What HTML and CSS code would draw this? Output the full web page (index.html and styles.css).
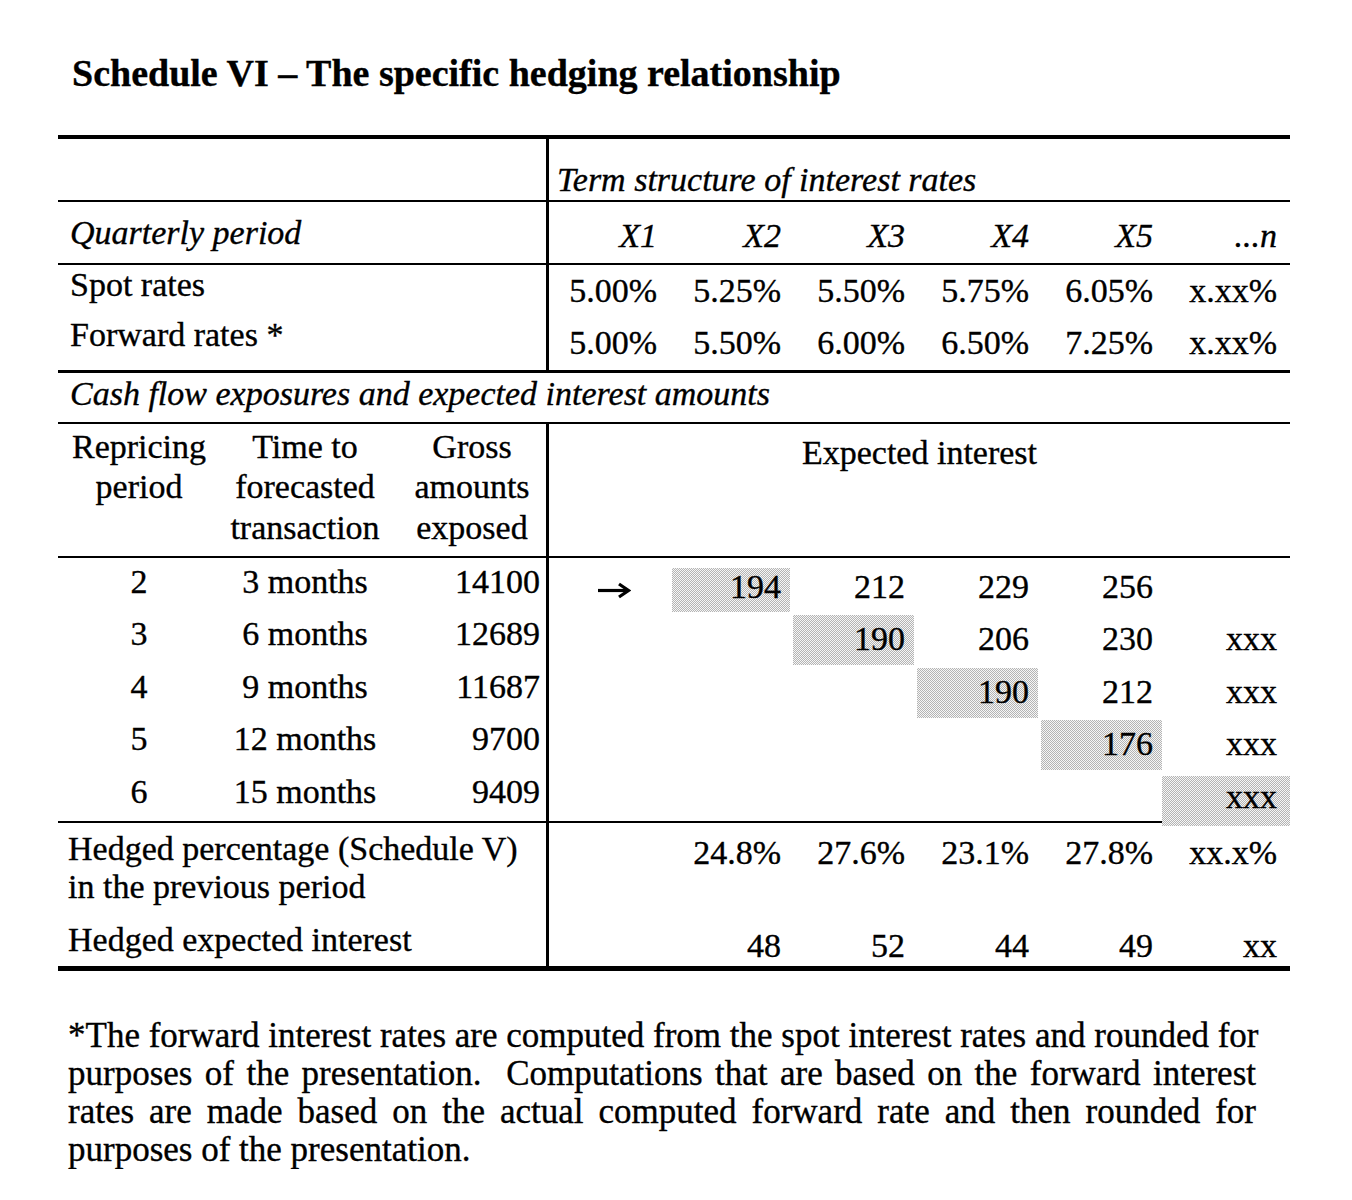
FILE: index.html
```html
<!DOCTYPE html>
<html lang="en">
<head>
<meta charset="utf-8">
<title>Schedule VI</title>
<link rel="stylesheet" href="styles.css">
</head>
<body>
<h1 class="title">Schedule VI – The specific hedging relationship</h1>
<div class="table">
  <div class="row r-term">
    <div class="lab"></div>
    <div class="span-right it">Term structure of interest rates</div>
  </div>
  <div class="row r-period">
    <div class="lab it">Quarterly period</div>
    <div class="num it">X1</div>
    <div class="num it">X2</div>
    <div class="num it">X3</div>
    <div class="num it">X4</div>
    <div class="num it">X5</div>
    <div class="num it">...n</div>
    <div></div>
  </div>
  <div class="row r-spot">
    <div class="lab">Spot rates</div>
    <div class="num">5.00%</div>
    <div class="num">5.25%</div>
    <div class="num">5.50%</div>
    <div class="num">5.75%</div>
    <div class="num">6.05%</div>
    <div class="num">x.xx%</div>
    <div></div>
  </div>
  <div class="row r-fwd">
    <div class="lab">Forward rates *</div>
    <div class="num">5.00%</div>
    <div class="num">5.50%</div>
    <div class="num">6.00%</div>
    <div class="num">6.50%</div>
    <div class="num">7.25%</div>
    <div class="num">x.xx%</div>
    <div></div>
  </div>
  <div class="row r-cash">
    <div class="full it">Cash flow exposures and expected interest amounts</div>
  </div>
  <div class="row r-head">
    <div class="lab sub3">
      <div class="ca">Repricing<br>period</div>
      <div class="cb">Time to<br>forecasted<br>transaction</div>
      <div class="cc hc">Gross<br>amounts<br>exposed</div>
    </div>
    <div class="exp">Expected interest</div>
  </div>
  <div class="row r-data">
    <div class="lab sub3">
      <div class="ca">2</div><div class="cb">3 months</div><div class="cc">14100</div>
    </div>
    <div class="arrow"><svg class="arrow-icon" width="34" height="18" viewBox="0 0 34 18" aria-label="arrow"><path d="M1 9.5 H30" stroke="#000" stroke-width="3.2" fill="none"/><path d="M22 3 L31.5 9.5 L22 16" stroke="#000" stroke-width="3.2" fill="none" stroke-linejoin="miter"/></svg></div>
    <div class="num"><span class="shade first">194</span></div>
    <div class="num">212</div>
    <div class="num">229</div>
    <div class="num">256</div>
    <div class="num"></div>
    <div></div>
  </div>
  <div class="row r-data">
    <div class="lab sub3">
      <div class="ca">3</div><div class="cb">6 months</div><div class="cc">12689</div>
    </div>
    <div></div>
    <div class="num"></div>
    <div class="num"><span class="shade">190</span></div>
    <div class="num">206</div>
    <div class="num">230</div>
    <div class="num">xxx</div>
    <div></div>
  </div>
  <div class="row r-data">
    <div class="lab sub3">
      <div class="ca">4</div><div class="cb">9 months</div><div class="cc">11687</div>
    </div>
    <div></div>
    <div class="num"></div>
    <div class="num"></div>
    <div class="num"><span class="shade">190</span></div>
    <div class="num">212</div>
    <div class="num">xxx</div>
    <div></div>
  </div>
  <div class="row r-data">
    <div class="lab sub3">
      <div class="ca">5</div><div class="cb">12 months</div><div class="cc">9700</div>
    </div>
    <div></div>
    <div class="num"></div>
    <div class="num"></div>
    <div class="num"></div>
    <div class="num"><span class="shade">176</span></div>
    <div class="num">xxx</div>
    <div></div>
  </div>
  <div class="row r-data last">
    <div class="lab sub3">
      <div class="ca">6</div><div class="cb">15 months</div><div class="cc">9409</div>
    </div>
    <div></div>
    <div class="num"></div>
    <div class="num"></div>
    <div class="num"></div>
    <div class="num"></div>
    <div class="num"><span class="shade end">xxx</span></div>
    <div></div>
  </div>
  <div class="row r-hp">
    <div class="lab">Hedged percentage (Schedule V)<br>in the previous period</div>
    <div></div>
    <div class="num">24.8%</div>
    <div class="num">27.6%</div>
    <div class="num">23.1%</div>
    <div class="num">27.8%</div>
    <div class="num">xx.x%</div>
    <div></div>
  </div>
  <div class="row r-he">
    <div class="lab">Hedged expected interest</div>
    <div></div>
    <div class="num">48</div>
    <div class="num">52</div>
    <div class="num">44</div>
    <div class="num">49</div>
    <div class="num">xx</div>
    <div></div>
  </div>
</div>
<p class="note">
  <span class="ln">*The forward interest rates are computed from the spot interest rates and rounded for</span>
  <span class="ln">purposes of the presentation.&nbsp; Computations that are based on the forward interest</span>
  <span class="ln">rates are made based on the actual computed forward rate and then rounded for</span>
  <span class="ln lastln">purposes of the presentation.</span>
</p>
</body>
</html>
```

FILE: styles.css
```css
* {
  box-sizing: border-box;
}

body {
  margin: 0;
  background: #fff;
  color: #000;
  font-family: "Liberation Serif", "Times New Roman", serif;
  font-size: 34px;
  -webkit-text-stroke: 0.35px #000;
}

.title {
  margin: 51px 0 0 72px;
  height: 44px;
  font-size: 38px;
  line-height: 44px;
  font-weight: bold;
}

.table {
  margin: 40px 0 0 58px;
  width: 1232px;
  border-top: 4px solid #000;
}

.row {
  display: grid;
  grid-template-columns: 491px 108px repeat(5, 124px) 13px;
  line-height: 38px;
  white-space: nowrap;
}

.it {
  font-style: italic;
}

.lab {
  border-right: 3px solid #000;
  padding-left: 12px;
}

.num {
  text-align: right;
}

.span-right {
  grid-column: 2 / -1;
  padding-left: 8px;
}

.full {
  grid-column: 1 / -1;
  padding-left: 12px;
}

/* upper section */
.r-term {
  height: 63px;
  border-bottom: 2px solid #000;
}
.r-term > * {
  padding-top: 21.5px;
}

.r-period {
  height: 63px;
  border-bottom: 2px solid #000;
}
.r-period > * {
  padding-top: 14.5px;
}
.r-period > .lab {
  padding-top: 12px;
}

.r-spot {
  height: 50px;
}
.r-spot > * {
  padding-top: 6.5px;
}
.r-spot > .lab {
  padding-top: 0.5px;
}

.r-fwd {
  height: 58px;
  border-bottom: 3px solid #000;
}
.r-fwd > * {
  padding-top: 8.5px;
}
.r-fwd > .lab {
  padding-top: 1px;
}

.r-cash {
  height: 51px;
  border-bottom: 2px solid #000;
}
.r-cash > * {
  padding-top: 1.5px;
}

/* header of the lower section */
.sub3 {
  display: grid;
  grid-template-columns: 162px 170px 156px;
  padding-left: 0;
}
.ca,
.cb {
  text-align: center;
}
.cc {
  text-align: right;
  padding-right: 6px;
}
.cc.hc {
  text-align: center;
  padding: 0 0 0 8px;
}

.r-head {
  height: 134px;
  border-bottom: 2px solid #000;
  line-height: 40.5px;
}
.r-head > .lab {
  padding-top: 2.5px;
}
.exp {
  grid-column: 2 / -1;
  text-align: center;
  line-height: 38px;
  padding-top: 9.5px;
}

/* data rows */
.r-data {
  height: 52.5px;
}
.r-data.last {
  height: 54.5px;
  border-bottom: 2px solid #000;
}
.r-data > * {
  padding-top: 9.5px;
}
.r-data > .lab {
  padding-top: 4.5px;
}

.arrow {
  padding: 0 0 0 48px;
  display: flex;
  align-items: flex-start;
}
.arrow-icon {
  display: block;
  margin-top: 23px;
}

.shade {
  display: block;
  margin: -5px -9px 0 12px;
  padding: 5px 9px 0 0;
  height: 50px;
  background-color: #fff;
  background-image: repeating-conic-gradient(#b4b4b4 0 25%, #f6f6f6 0 50%);
  background-size: 2px 2px;
}
.shade.first {
  margin-left: 15px;
  margin-top: 0;
  padding-top: 0;
  height: 44px;
}
.shade.end {
  margin-left: 9px;
  margin-right: -13px;
  padding-right: 13px;
  margin-top: -2px;
  padding-top: 2px;
  height: 50px;
}

/* bottom rows */
.r-hp {
  height: 92.5px;
}
.r-hp > * {
  padding-top: 11px;
}
.r-hp > .lab {
  padding-top: 7px;
  padding-left: 10px;
}

.r-he {
  height: 56px;
  border-bottom: 5px solid #000;
}
.r-he > * {
  padding-top: 11.5px;
}
.r-he > .lab {
  padding-top: 5.5px;
  padding-left: 10px;
}

/* footnote */
.note {
  margin: 46px 0 0 68px;
  width: 1188px;
  font-size: 35px;
  line-height: 38px;
}
.ln {
  display: block;
  text-align: justify;
  text-align-last: justify;
  white-space: nowrap;
}
.ln.lastln {
  text-align-last: left;
}
```
